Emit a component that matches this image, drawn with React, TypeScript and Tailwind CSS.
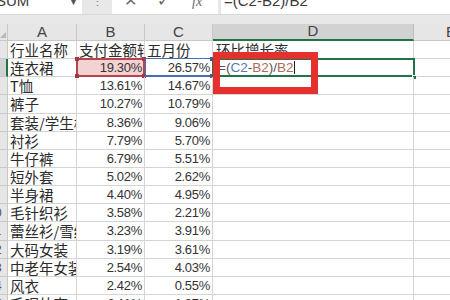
import React from "react";

const rows: [string, string, string, string][] = [
  ["行业名称", "支付金额转化率", "五月份", "环比增长率"],
  ["连衣裙", "19.30%", "26.57%", ""],
  ["T恤", "13.61%", "14.67%", ""],
  ["裤子", "10.27%", "10.79%", ""],
  ["套装/学生校服", "8.36%", "9.06%", ""],
  ["衬衫", "7.79%", "5.70%", ""],
  ["牛仔裤", "6.79%", "5.51%", ""],
  ["短外套", "5.02%", "2.62%", ""],
  ["半身裙", "4.40%", "4.95%", ""],
  ["毛针织衫", "3.58%", "2.21%", ""],
  ["蕾丝衫/雪纺衫", "3.23%", "3.91%", ""],
  ["大码女装", "3.19%", "3.61%", ""],
  ["中老年女装", "2.54%", "4.03%", ""],
  ["风衣", "2.42%", "0.55%", ""],
  ["毛呢外套", "2.11%", "1.37%", ""],
];

const cjk = { fontFamily: '"Noto Sans CJK SC", "Noto Sans", sans-serif' };
const num = { fontFamily: '"Liberation Sans", Arial, sans-serif' };

function Handle({ className }: { className: string }) {
  return <div className={"absolute w-[4px] h-[4px] " + className} />;
}

export default function App() {
  return (
    <div className="relative w-[450px] h-[300px] overflow-hidden bg-white text-[#2b2b2b]" style={num}>
      {/* formula bar */}
      <div className="flex h-[14px] bg-[#e8e8e8] overflow-hidden">
        <div className="relative w-[82px] bg-white overflow-hidden flex">
          <span className="ml-[-4px] mt-[-7px] text-[15px] leading-[16px] text-[#3a3a3a]">SUM</span>
          <span className="absolute left-[69px] top-[-2px] text-[9px] leading-[9px] text-[#555]">▼</span>
        </div>
        <div className="w-[30px] flex justify-center">
          <span className="mt-[-3px] text-[11px] leading-[11px] text-[#777]">⋮</span>
        </div>
        <div className="relative w-[106px] bg-white overflow-hidden text-[#6a6a6a]">
          <span className="absolute left-[12px] top-[-7px] text-[16px] leading-[16px]">✕</span>
          <span className="absolute left-[45px] top-[-7px] text-[16px] leading-[16px]">✓</span>
          <span className="absolute left-[80px] top-[-6px] text-[14px] leading-[15px] italic" style={{ fontFamily: '"Liberation Serif", serif' }}>fx</span>
        </div>
        <div className="w-[3px]" />
        <div className="flex-1 bg-white overflow-hidden">
          <span className="ml-[3px] mt-[-7px] block text-[15px] leading-[15px] text-[#3a3a3a]">=(C2-B2)/B2</span>
        </div>
      </div>
      <div className="h-[10px] bg-[#e8e8e8] border-t border-[#d8d8d8]" />

      {/* grid */}
      <div className="grid grid-cols-[8px_69px_68px_68px_201px_36px]">
        {/* header row */}
        <div className="relative h-[17px] bg-[#e6e6e6] border-r border-b border-[#c8c8c8]">
          <div className="absolute right-[1px] bottom-[2px] w-0 h-0 border-l-[6px] border-l-transparent border-b-[6px] border-b-[#b8b8b8]" />
        </div>
        {["A", "B", "C"].map((c) => (
          <div key={c} className="h-[17px] bg-[#e6e6e6] border-r border-b border-[#c8c8c8] flex items-center justify-center text-[15px] text-[#444]">
            {c}
          </div>
        ))}
        <div className="h-[17px] bg-[#d2d2d2] border-r border-[#bdbdbd] border-b-2 border-b-[#217346] flex items-center justify-center text-[15px] text-[#444]">
          D
        </div>
        <div className="h-[17px] bg-[#e6e6e6] border-b border-[#c8c8c8] flex items-center pl-[32px] text-[15px] text-[#444] overflow-hidden">
          E
        </div>

        {rows.map((r, i) => {
          const active = i === 1;
          return (
            <React.Fragment key={i}>
              <div
                className={
                  "h-[18.15px] overflow-hidden flex text-[13px] text-[#555] border-b border-[#c8c8c8] " +
                  (active ? "bg-[#d2d2d2] border-r-2 border-r-[#217346]" : "bg-[#e6e6e6] border-r border-r-[#c8c8c8]")
                }
              >
                <span className="ml-[-18px] w-[26px] text-center leading-[18px]">{i + 1}</span>
              </div>
              <div className="h-[18.15px] border-r border-b border-[#d4d4d4] overflow-hidden whitespace-nowrap pl-[2px] text-[14.5px] leading-[17px]" style={cjk}>
                {r[0]}
              </div>
              {i === 0 ? (
                <div className="h-[18.15px] border-r border-b border-[#d4d4d4] overflow-hidden whitespace-nowrap pl-[2px] text-[14.5px] leading-[17px]" style={cjk}>
                  {r[1]}
                </div>
              ) : (
                <div
                  className={
                    "relative h-[18.15px] border-r border-b border-[#d4d4d4] text-right pr-[2px] text-[13px] tracking-[-0.3px] leading-[18px] text-[#333] " +
                    (active ? "bg-[#f3d2d2]" : "")
                  }
                >
                  {r[1]}
                  {active && (
                    <>
                      <div className="absolute left-[-1px] right-[-1px] top-[-1px] bottom-[-1px] border-2 border-[#b8434f]" />
                      <Handle className="left-[-2px] top-[-2px] bg-[#a33545]" />
                      <Handle className="right-[-2px] top-[-2px] bg-[#a33545]" />
                      <Handle className="left-[-2px] bottom-[-2px] bg-[#a33545]" />
                      <Handle className="right-[-2px] bottom-[-2px] bg-[#a33545]" />
                    </>
                  )}
                </div>
              )}
              {i === 0 ? (
                <div className="h-[18.15px] border-r border-b border-[#d4d4d4] overflow-hidden whitespace-nowrap pl-[2px] text-[14.5px] leading-[17px]" style={cjk}>
                  {r[2]}
                </div>
              ) : (
                <div className="relative h-[18.15px] border-r border-b border-[#d4d4d4] text-right pr-[2px] text-[13px] tracking-[-0.3px] leading-[18px] text-[#333]">
                  {r[2]}
                  {active && (
                    <>
                      <div className="absolute left-[0px] right-[-1px] top-[-1px] bottom-[-1px] border border-b-2 border-[#4a6db0]" />
                      <Handle className="right-[-2px] top-[-2px] bg-[#3d5f9f]" />
                      <Handle className="right-[-2px] bottom-[-2px] bg-[#3d5f9f]" />
                    </>
                  )}
                </div>
              )}
              <div className="relative h-[18.15px] border-r border-b border-[#d4d4d4] whitespace-nowrap">
                {i === 0 && (
                  <span className="pl-[3px] text-[14.5px] leading-[17px] block" style={cjk}>
                    {r[3]}
                  </span>
                )}
                {active && (
                  <>
                    <div className="flex items-center h-full pl-[5px] text-[13.5px] text-[#555]">
                      <span>=(</span>
                      <span className="text-[#5a77ad]">C2</span>
                      <span>-</span>
                      <span className="text-[#b06a55]">B2</span>
                      <span>)/</span>
                      <span className="text-[#b06a55]">B2</span>
                      <span className="ml-[1px] w-[1px] h-[13px] bg-[#222]" />
                    </div>
                    <div className="absolute left-[-1px] right-[-2px] top-[-1px] bottom-[-1px] border-2 border-[#217346]" />
                    <div className="absolute right-[-4px] bottom-[-4px] w-[5px] h-[5px] bg-[#217346] border border-white" />
                  </>
                )}
              </div>
              <div className="h-[18.15px] border-b border-[#d4d4d4]" />
            </React.Fragment>
          );
        })}
      </div>

      {/* red annotation box */}
      <div className="absolute left-[213px] top-[52px] w-[105px] h-[42px] border-[7px] border-[#e5302e]" />
    </div>
  );
}
